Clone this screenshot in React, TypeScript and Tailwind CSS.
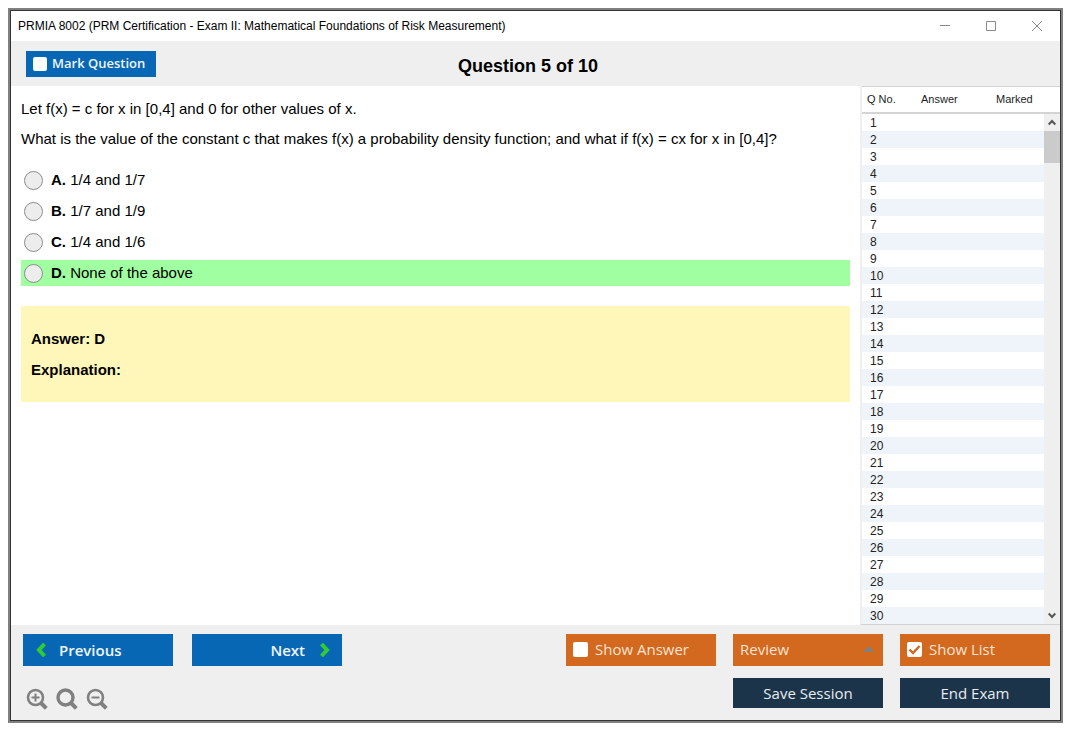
import { useState } from "react";

const options = [
  { letter: "A", text: "1/4 and 1/7" },
  { letter: "B", text: "1/7 and 1/9" },
  { letter: "C", text: "1/4 and 1/6" },
  { letter: "D", text: "None of the above", correct: true },
];

const questionNumbers = Array.from({ length: 30 }, (_, i) => i + 1);

function TitleBar() {
  return (
    <div className="flex h-[30px] shrink-0 items-center justify-between bg-white pl-[7px] pr-[17px]">
      <p className="text-xs">
        PRMIA 8002 (PRM Certification - Exam II: Mathematical Foundations of Risk Measurement)
      </p>
      <div className="flex gap-[34px] text-[#8a8a8a]">
        <button aria-label="Minimize">
          <svg width="12" height="12" viewBox="0 0 12 12" fill="none" stroke="currentColor">
            <path d="M1 5.500h10" />
          </svg>
        </button>
        <button aria-label="Maximize">
          <svg width="12" height="12" viewBox="0 0 12 12" fill="none" stroke="currentColor">
            <path d="M1.500 1.500h9v9h-9z" />
          </svg>
        </button>
        <button aria-label="Close">
          <svg width="12" height="12" viewBox="0 0 12 12" fill="none" stroke="currentColor">
            <path d="M1 1l10 10M11 1L1 11" />
          </svg>
        </button>
      </div>
    </div>
  );
}

function Header() {
  return (
    <div className="grid h-[45px] shrink-0 grid-cols-[1fr_auto_1fr] items-center bg-[#efefef] pl-[15px] pr-[30px]">
      <label className="flex h-[26px] w-[130px] items-center gap-[5px] bg-[#0867b5] pl-[7px] font-['Open_Sans',sans-serif] text-[13px] font-semibold text-[#f0f6fb]">
        <input type="checkbox" className="size-[14px] appearance-none rounded-[2px] bg-white" />
        Mark Question
      </label>
      <h1 className="pt-1 text-lg font-bold">Question 5 of 10</h1>
    </div>
  );
}

function QuestionPanel() {
  const [selected, setSelected] = useState("");

  return (
    <div className="min-w-0 flex-1 pl-[10px] pr-[10px] pt-[13px] text-[15px] leading-5">
      <p>Let f(x) = c for x in [0,4] and 0 for other values of x.</p>
      <p className="mt-[10px]">
        What is the value of the constant c that makes f(x) a probability density function; and what
        if f(x) = cx for x in [0,4]?
      </p>

      <div className="mt-[18px] flex flex-col gap-[5px]">
        {options.map((option) => (
          <label
            key={option.letter}
            className={
              option.correct
                ? "flex h-[26px] items-center bg-[#a0ffa0] pl-[3px]"
                : "flex h-[26px] items-center pl-[3px]"
            }
          >
            <input
              type="radio"
              name="answer"
              checked={selected === option.letter}
              onChange={() => setSelected(option.letter)}
              className="mr-2 size-[19px] appearance-none rounded-full border border-[#8c8c8c] bg-[#ededed] checked:border-[6px] checked:border-[#0867b5]"
            />
            <span>
              <b>{option.letter}.</b> {option.text}
            </span>
          </label>
        ))}
      </div>

      <div className="mt-5 flex flex-col gap-[11px] bg-[#fef7b9] px-[10px] pb-[22px] pt-[23px] font-bold">
        <p>Answer: D</p>
        <p>Explanation:</p>
      </div>
    </div>
  );
}

function QuestionList() {
  return (
    <div className="flex w-[200px] shrink-0 overflow-hidden border-b border-l-2 border-b-[#d4d4d4] border-l-[#efefef]">
      <table className="h-fit flex-1 table-fixed border-separate border-spacing-0 text-[11px] text-[#222222]">
        <thead>
          <tr className="h-[28px] text-left">
            <th className="w-[53px] border-b-2 border-t border-[#d4d4d4] p-0 pl-[5px] font-normal">Q No.</th>
            <th className="w-[75px] border-b-2 border-t border-[#d4d4d4] p-0 pl-[6px] font-normal">Answer</th>
            <th className="border-b-2 border-t border-[#d4d4d4] p-0 pl-[6px] font-normal">Marked</th>
          </tr>
        </thead>
        <tbody>
          {questionNumbers.map((n) => (
            <tr key={n} className="h-[17px] even:bg-[#eef4f9]">
              <td className="p-0 pl-2 pt-px text-xs leading-4">{n}</td>
              <td className="p-0"></td>
              <td className="p-0"></td>
            </tr>
          ))}
        </tbody>
      </table>

      {/* scrollbar */}
      <div className="flex w-4 flex-col">
        <div className="h-[28px] shrink-0 border-b-2 border-t border-[#d4d4d4]"></div>
        <div className="flex flex-1 flex-col bg-[#efefef]">
          <button aria-label="Scroll up" className="flex h-[17px] items-center justify-center">
            <svg width="8" height="7" viewBox="0 0 8 7" fill="none" stroke="#555555" strokeWidth="2">
              <path d="M.7 5.500L4 2l3.300 3.500" />
            </svg>
          </button>
          <div className="h-8 bg-[#cbcbcb]"></div>
          <button aria-label="Scroll down" className="mt-auto flex h-[17px] items-center justify-center">
            <svg width="8" height="7" viewBox="0 0 8 7" fill="none" stroke="#555555" strokeWidth="2">
              <path d="M.7 1.500L4 5l3.300-3.500" />
            </svg>
          </button>
        </div>
      </div>
    </div>
  );
}

function ZoomIcon({ sign }: { sign?: string }) {
  return (
    <svg width="22" height="22" viewBox="0 0 22 22" fill="none" stroke="#808080">
      <circle cx="9.500" cy="9.500" r="7.500" strokeWidth={sign ? 2.6 : 3.4} />
      <path d="M14.500 14.500l5.800 5.800" strokeWidth="4" />
      {sign && <path d={sign} strokeWidth="2" />}
    </svg>
  );
}

function Footer() {
  return (
    <div className="flex h-[95px] shrink-0 justify-between bg-[#efefef] pl-3 pr-[10px] pt-[9px] font-['Open_Sans',sans-serif] text-[15px]">
      <div>
        <div className="flex gap-[19px] font-semibold text-[#f0f6fb]">
          <button className="flex h-8 w-[150px] items-center gap-3 bg-[#0867b5] pl-[13px]">
            <svg width="11" height="16" viewBox="0 0 11 16" fill="none" stroke="#32cd32" strokeWidth="4">
              <path d="M8.500 2L3 8l5.500 6" />
            </svg>
            Previous
          </button>
          <button className="flex h-8 w-[150px] items-center justify-end gap-[14px] bg-[#0867b5] pr-3">
            Next
            <svg width="11" height="16" viewBox="0 0 11 16" fill="none" stroke="#32cd32" strokeWidth="4">
              <path d="M2.500 2L8 8l-5.500 6" />
            </svg>
          </button>
        </div>
        <div className="mt-[22px] flex gap-2 pl-[3px]">
          <button aria-label="Zoom in">
            <ZoomIcon sign="M5.500 9.500h8M9.500 5.500v8" />
          </button>
          <button aria-label="Reset zoom">
            <ZoomIcon />
          </button>
          <button aria-label="Zoom out">
            <ZoomIcon sign="M5.500 9.500h8" />
          </button>
        </div>
      </div>

      <div className="grid h-fit grid-cols-[150px_150px_150px] gap-x-[17px] gap-y-3 text-[#f8e4d6]">
        <label className="flex h-8 items-center gap-[7px] bg-[#d2691e] pb-0.5 pl-[7px]">
          <input type="checkbox" className="size-[15px] appearance-none rounded-[2px] bg-white" />
          Show Answer
        </label>
        <button aria-haspopup="menu" className="flex h-8 items-center justify-between bg-[#d2691e] pb-0.5 pl-[7px] pr-[9px]">
          Review
          <svg width="11" height="6" viewBox="0 0 11 6" fill="#808080">
            <path d="M5.500 0L11 6H0z" />
          </svg>
        </button>
        <label className="flex h-8 items-center gap-[7px] bg-[#d2691e] pb-0.5 pl-[7px]">
          <span className="grid size-[15px]">
            <input
              type="checkbox"
              defaultChecked
              className="peer col-start-1 row-start-1 size-[15px] appearance-none rounded-[2px] bg-white"
            />
            <svg
              viewBox="0 0 15 15"
              fill="none"
              stroke="#d2691e"
              strokeWidth="2.400"
              className="pointer-events-none invisible col-start-1 row-start-1 peer-checked:visible"
            >
              <path d="M2.500 7.500l3.500 3.500 6.500-7" />
            </svg>
          </span>
          Show List
        </label>
        <button className="col-start-2 h-[30px] bg-[#1b344a] text-[#e8ecef]">Save Session</button>
        <button className="h-[30px] bg-[#1b344a] text-[#e8ecef]">End Exam</button>
      </div>
    </div>
  );
}

export default function App() {
  return (
    <div className="h-screen bg-white pb-3 pl-2 pr-3 pt-2 font-['Liberation_Sans',Arial,sans-serif] text-black">
      <div className="h-full border-2 border-[#808080]">
        <div className="flex h-full flex-col border border-[#333333]">
          <TitleBar />
          <Header />
          <div className="flex min-h-0 flex-1">
            <QuestionPanel />
            <QuestionList />
          </div>
          <Footer />
        </div>
      </div>
    </div>
  );
}
